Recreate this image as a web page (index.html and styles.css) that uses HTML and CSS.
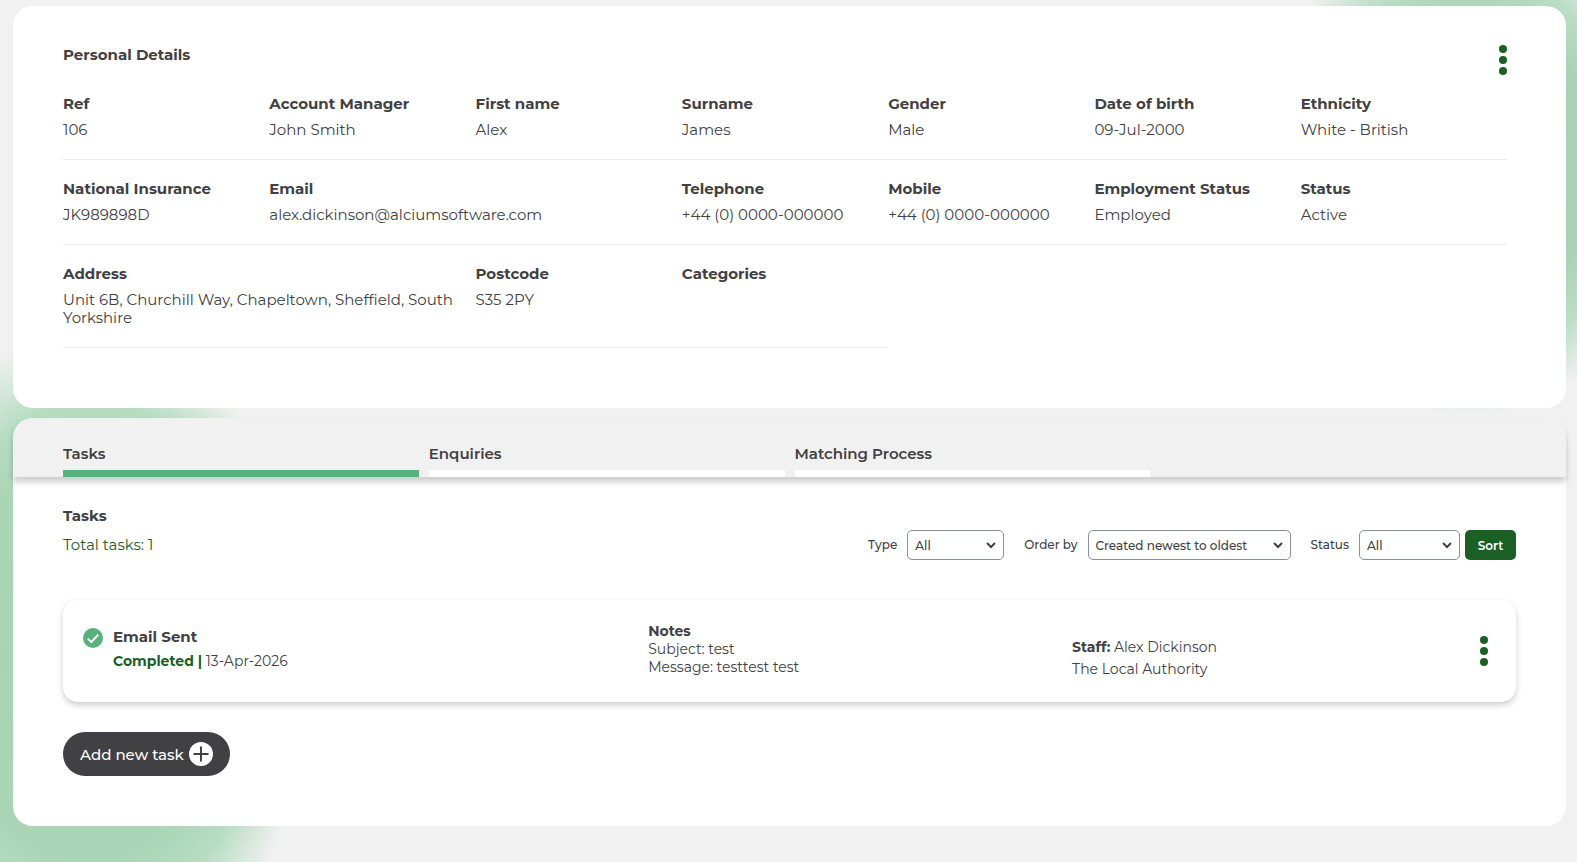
FILE: index.html
```html
<!DOCTYPE html>
<html lang="en">
<head>
    <meta charset="UTF-8">
    <meta name="viewport" content="width=device-width, initial-scale=1.0">
    <title>Personal Details</title>
    <link rel="stylesheet" href="styles.css">
</head>
<body>
    <section class="panel details">
        <div class="details-header">
            <h1>Personal Details</h1>
            <button type="button" class="menu-btn" aria-label="Personal details menu">
                <svg width="8" height="30" viewBox="0 0 8 30"><circle cx="4" cy="4" r="4"/><circle cx="4" cy="15" r="4"/><circle cx="4" cy="26" r="4"/></svg>
            </button>
        </div>
        <dl class="details-grid">
            <div class="field"><dt>Ref</dt><dd>106</dd></div>
            <div class="field"><dt>Account Manager</dt><dd>John Smith</dd></div>
            <div class="field"><dt>First name</dt><dd>Alex</dd></div>
            <div class="field"><dt>Surname</dt><dd>James</dd></div>
            <div class="field"><dt>Gender</dt><dd>Male</dd></div>
            <div class="field"><dt>Date of birth</dt><dd>09-Jul-2000</dd></div>
            <div class="field"><dt>Ethnicity</dt><dd>White - British</dd></div>

            <div class="field"><dt>National Insurance</dt><dd>JK989898D</dd></div>
            <div class="field wide"><dt>Email</dt><dd>alex.dickinson@alciumsoftware.com</dd></div>
            <div class="field"><dt>Telephone</dt><dd>+44 (0) 0000-000000</dd></div>
            <div class="field"><dt>Mobile</dt><dd>+44 (0) 0000-000000</dd></div>
            <div class="field"><dt>Employment Status</dt><dd>Employed</dd></div>
            <div class="field"><dt>Status</dt><dd>Active</dd></div>

            <div class="field wide"><dt>Address</dt><dd>Unit 6B, Churchill Way, Chapeltown, Sheffield, South Yorkshire</dd></div>
            <div class="field"><dt>Postcode</dt><dd>S35 2PY</dd></div>
            <div class="field"><dt>Categories</dt><dd></dd></div>
        </dl>
    </section>

    <section class="panel">
        <nav class="tabs">
            <a href="#tasks" class="tab active">Tasks</a>
            <a href="#enquiries" class="tab">Enquiries</a>
            <a href="#matching" class="tab">Matching Process</a>
        </nav>
        <div class="tab-content" id="tasks">
            <h2>Tasks</h2>
            <div class="toolbar">
                <p class="total">Total tasks: 1</p>
                <form class="filters">
                    <div class="filter">
                        <label for="type">Type</label>
                        <select id="type" class="select-type"><option>All</option></select>
                    </div>
                    <div class="filter">
                        <label for="order">Order by</label>
                        <select id="order" class="select-order"><option>Created newest to oldest</option></select>
                    </div>
                    <div class="filter">
                        <label for="status">Status</label>
                        <select id="status" class="select-status"><option>All</option></select>
                        <button type="button" class="sort-btn">Sort</button>
                    </div>
                </form>
            </div>

            <article class="task-card">
                <div class="task-main">
                    <svg class="task-icon" width="20" height="20" viewBox="0 0 20 20">
                        <circle cx="10" cy="10" r="10" fill="#58b17a"/>
                        <path d="M4.8 10.6l3.5 3.4 7-7.4" fill="none" stroke="#fff" stroke-width="2"/>
                    </svg>
                    <div>
                        <h3>Email Sent</h3>
                        <p class="task-state"><strong>Completed |</strong> 13-Apr-2026</p>
                    </div>
                </div>
                <div class="task-notes">
                    <h4>Notes</h4>
                    <p>Subject: test</p>
                    <p>Message: testtest test</p>
                </div>
                <div class="task-side">
                    <div class="task-staff">
                        <p><strong>Staff:</strong> Alex Dickinson</p>
                        <p>The Local Authority</p>
                    </div>
                    <button type="button" class="menu-btn" aria-label="Task menu">
                        <svg width="8" height="30" viewBox="0 0 8 30"><circle cx="4" cy="4" r="4"/><circle cx="4" cy="15" r="4"/><circle cx="4" cy="26" r="4"/></svg>
                    </button>
                </div>
            </article>

            <button type="button" class="add-btn">
                Add new task
                <svg width="24" height="24" viewBox="0 0 24 24">
                    <circle cx="12" cy="12" r="12" fill="#fff"/>
                    <path d="M12 4.5v15M4.5 12h15" stroke="#414042" stroke-width="2"/>
                </svg>
            </button>
        </div>
    </section>
</body>
</html>
```
FILE: styles.css
```css
:root {
    --text: #414042;
    --green: #58b17a;
    --green-dark: #1a6024;
    --grey: #f1f1f1;
    --line: #ececec;
}

* {
    margin: 0;
    padding: 0;
    box-sizing: border-box;
}

body {
    min-height: 100vh;
    padding: 6px 11px 36px 13px;
    display: flex;
    flex-direction: column;
    gap: 10px;
    font-family: Montserrat, Inter, sans-serif;
    font-size: 15px;
    line-height: 18px;
    color: var(--text);
    background-color: var(--grey);
    background-image:
        radial-gradient(ellipse 210px 250px at calc(100% - 107px) 165px, #a5d0b0 0%, #a9d2b4 60%, #bcdec6 78%, rgba(200, 226, 208, 0) 100%),
        radial-gradient(ellipse 225px 330px at 90px 660px, #a5d0b0 0%, #abd5b7 60%, #b6dcc2 78%, rgba(200, 226, 208, 0) 100%);
    background-repeat: no-repeat;
}

h1, h2, h3, h4, dt {
    font-size: 15px;
    font-weight: 700;
}

button {
    border: none;
    font-family: inherit;
    cursor: pointer;
}

.panel {
    background-color: #fff;
    border-radius: 20px;
}

.details {
    padding: 39px 59px 60px 50px;
}

.details-header {
    display: flex;
    justify-content: space-between;
    align-items: flex-start;
}

.details-header h1 {
    line-height: 20px;
}

.menu-btn {
    display: flex;
    background: none;
}

.menu-btn svg {
    fill: var(--green-dark);
}

.details-grid {
    display: grid;
    grid-template-columns: repeat(7, 1fr);
}

.field {
    padding: 20px 0;
    border-bottom: 1px solid var(--line);
}

.field.wide {
    grid-column: span 2;
}

.field dt {
    margin-bottom: 8px;
}

.field dd {
    min-height: 18px;
}

.tabs {
    display: grid;
    grid-template-columns: repeat(4, 1fr);
    gap: 10px;
    padding: 27px 50px 0;
    background-color: var(--grey);
    border-radius: 20px 20px 0 0;
    box-shadow: 0 5px 6px rgba(0, 0, 0, 0.2);
}

.tab {
    padding-bottom: 7px;
    border-bottom: 7px solid #fff;
    font-weight: 600;
    color: var(--text);
    text-decoration: none;
}

.tab.active {
    border-bottom-color: var(--green);
}

.tab-content {
    padding: 30px 50px 50px;
}

.toolbar {
    display: flex;
    justify-content: space-between;
    align-items: center;
    margin: 5px 0 40px;
}

.total {
    color: var(--green-dark);
}

.filters {
    display: flex;
    gap: 20px;
    font-size: 12px;
    font-weight: 500;
}

.filter {
    display: flex;
    align-items: center;
}

.filter label {
    margin-right: 10px;
}

.filter select {
    height: 30px;
    padding: 0 7px;
    border: 1px solid #8a8da3;
    border-radius: 5px;
    appearance: none;
    background: #fff url("data:image/svg+xml,%3Csvg xmlns='http://www.w3.org/2000/svg' width='10' height='7' viewBox='0 0 10 7'%3E%3Cpath d='M1 1l4 4 4-4' fill='none' stroke='%23414042' stroke-width='2'/%3E%3C/svg%3E") no-repeat right 7px center;
    color: var(--text);
    font-family: inherit;
    font-size: 12px;
    font-weight: 500;
}

.filter .select-type {
    width: 97px;
}

.filter .select-order {
    width: 203px;
}

.filter .select-status {
    width: 101px;
}

.sort-btn {
    min-width: 51px;
    height: 30px;
    margin-left: 5px;
    padding: 0 12px;
    border-radius: 5px;
    background-color: var(--green-dark);
    color: #fff;
    font-size: 12px;
    font-weight: 600;
}

.task-card {
    display: grid;
    grid-template-columns: 4fr 3fr 3fr;
    min-height: 102px;
    padding: 20px;
    border-radius: 15px;
    box-shadow: 0 3px 6px rgba(0, 0, 0, 0.2);
    font-size: 14px;
}

.task-main {
    display: flex;
    gap: 10px;
    padding-top: 8px;
}

.task-state {
    margin-top: 6px;
}

.task-state strong {
    color: var(--green-dark);
}

.task-notes {
    padding-top: 2px;
}

.task-notes h4 {
    font-size: 14px;
}

.task-side {
    display: flex;
    justify-content: space-between;
    align-items: center;
    padding-right: 8px;
}

.task-staff {
    padding-top: 14px;
    line-height: 22px;
}

.add-btn {
    display: flex;
    align-items: center;
    gap: 5px;
    height: 44px;
    margin-top: 30px;
    padding: 0 17px;
    border-radius: 22px;
    background-color: var(--text);
    color: #fff;
    font-size: 15px;
    font-weight: 500;
}
```
